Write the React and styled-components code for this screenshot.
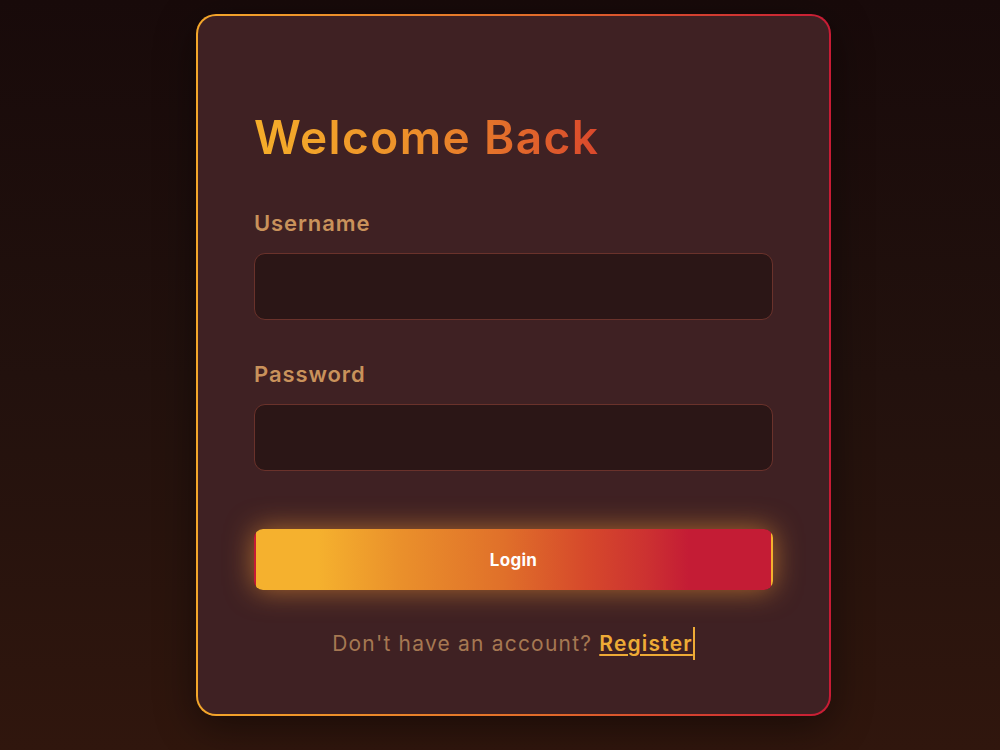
import React from "react";
import styled, { createGlobalStyle } from "styled-components";

const GlobalStyle = createGlobalStyle`
  html, body {
    margin: 0;
    padding: 0;
  }
  body {
    font-family: Inter, "Noto Sans", sans-serif;
    background: linear-gradient(180deg, #180a0a 0%, #22110d 50%, #30160d 100%);
    min-height: 100vh;
  }
`;

const Page = styled.div`
  min-height: 750px;
  display: flex;
  justify-content: center;
  align-items: flex-start;
  padding: 14px 0 0 27px;
  box-sizing: border-box;
`;

const Card = styled.form`
  width: 635px;
  height: 702px;
  box-sizing: border-box;
  padding: 98px 56px 0;
  border-radius: 20px;
  border: 2px solid transparent;
  background:
    linear-gradient(#3f2123, #3f2123) padding-box,
    linear-gradient(90deg, #f4a72a 0%, #e06a2a 55%, #c81b35 100%) border-box;
  box-shadow: 0 10px 40px rgba(0, 0, 0, 0.45);
  display: flex;
  flex-direction: column;
`;

const Title = styled.h1`
  margin: 0 0 52px;
  font-size: 46px;
  font-weight: 600;
  letter-spacing: 1.4px;
  line-height: 1;
  background: linear-gradient(90deg, #f5ae2a 0%, #eb8c2a 50%, #d9482c 100%);
  -webkit-background-clip: text;
  background-clip: text;
  color: transparent;
  align-self: flex-start;
`;

const Field = styled.div`
  display: flex;
  flex-direction: column;
  gap: 19px;
  margin-bottom: ${(p) => p.$gap}px;
`;

const Label = styled.label`
  font-size: 22px;
  font-weight: 600;
  letter-spacing: 0.9px;
  color: #c9925b;
  line-height: 1;
`;

const Input = styled.input`
  height: 67px;
  box-sizing: border-box;
  border-radius: 11px;
  border: 1.5px solid #6a322b;
  background: #2b1616;
  color: #e8cfa8;
  font-size: 18px;
  padding: 0 18px;
  outline: none;
`;

/* transparent border lets the gradient wrap onto the edges */
const Button = styled.button`
  height: 61px;
  border: 2px solid transparent;
  border-radius: 9px;
  background: linear-gradient(
    90deg,
    #f5b12e 0%,
    #f5b12e 12%,
    #ea902b 28%,
    #e0702a 48%,
    #d6492b 64%,
    #cc3131 76%,
    #c41c35 84%,
    #c41c35 100%
  );
  box-shadow: 0 0 28px rgba(240, 150, 55, 0.62);
  color: #fff;
  font-family: Inter, "Noto Sans", sans-serif;
  font-size: 17px;
  font-weight: 700;
  letter-spacing: 0.3px;
  cursor: pointer;
`;

const Footer = styled.p`
  margin: 43px 0 0;
  text-align: center;
  font-size: 21px;
  letter-spacing: 1.2px;
  line-height: 1;
  color: #a67852;
`;

const Link = styled.a`
  color: #eeab36;
  font-weight: 600;
  text-decoration: underline;
  text-underline-offset: 3px;
  border-right: 2px solid #eeab36;
  padding: 4px 0;
  cursor: pointer;
`;

export default function App() {
  return (
    <>
      <GlobalStyle />
      <Page>
        <Card onSubmit={(e) => e.preventDefault()}>
          <Title>Welcome Back</Title>
          <Field $gap={43}>
            <Label htmlFor="username">Username</Label>
            <Input id="username" type="text" />
          </Field>
          <Field $gap={58}>
            <Label htmlFor="password">Password</Label>
            <Input id="password" type="password" />
          </Field>
          <Button type="submit">Login</Button>
          <Footer>
            Don't have an account? <Link>Register</Link>
          </Footer>
        </Card>
      </Page>
    </>
  );
}
